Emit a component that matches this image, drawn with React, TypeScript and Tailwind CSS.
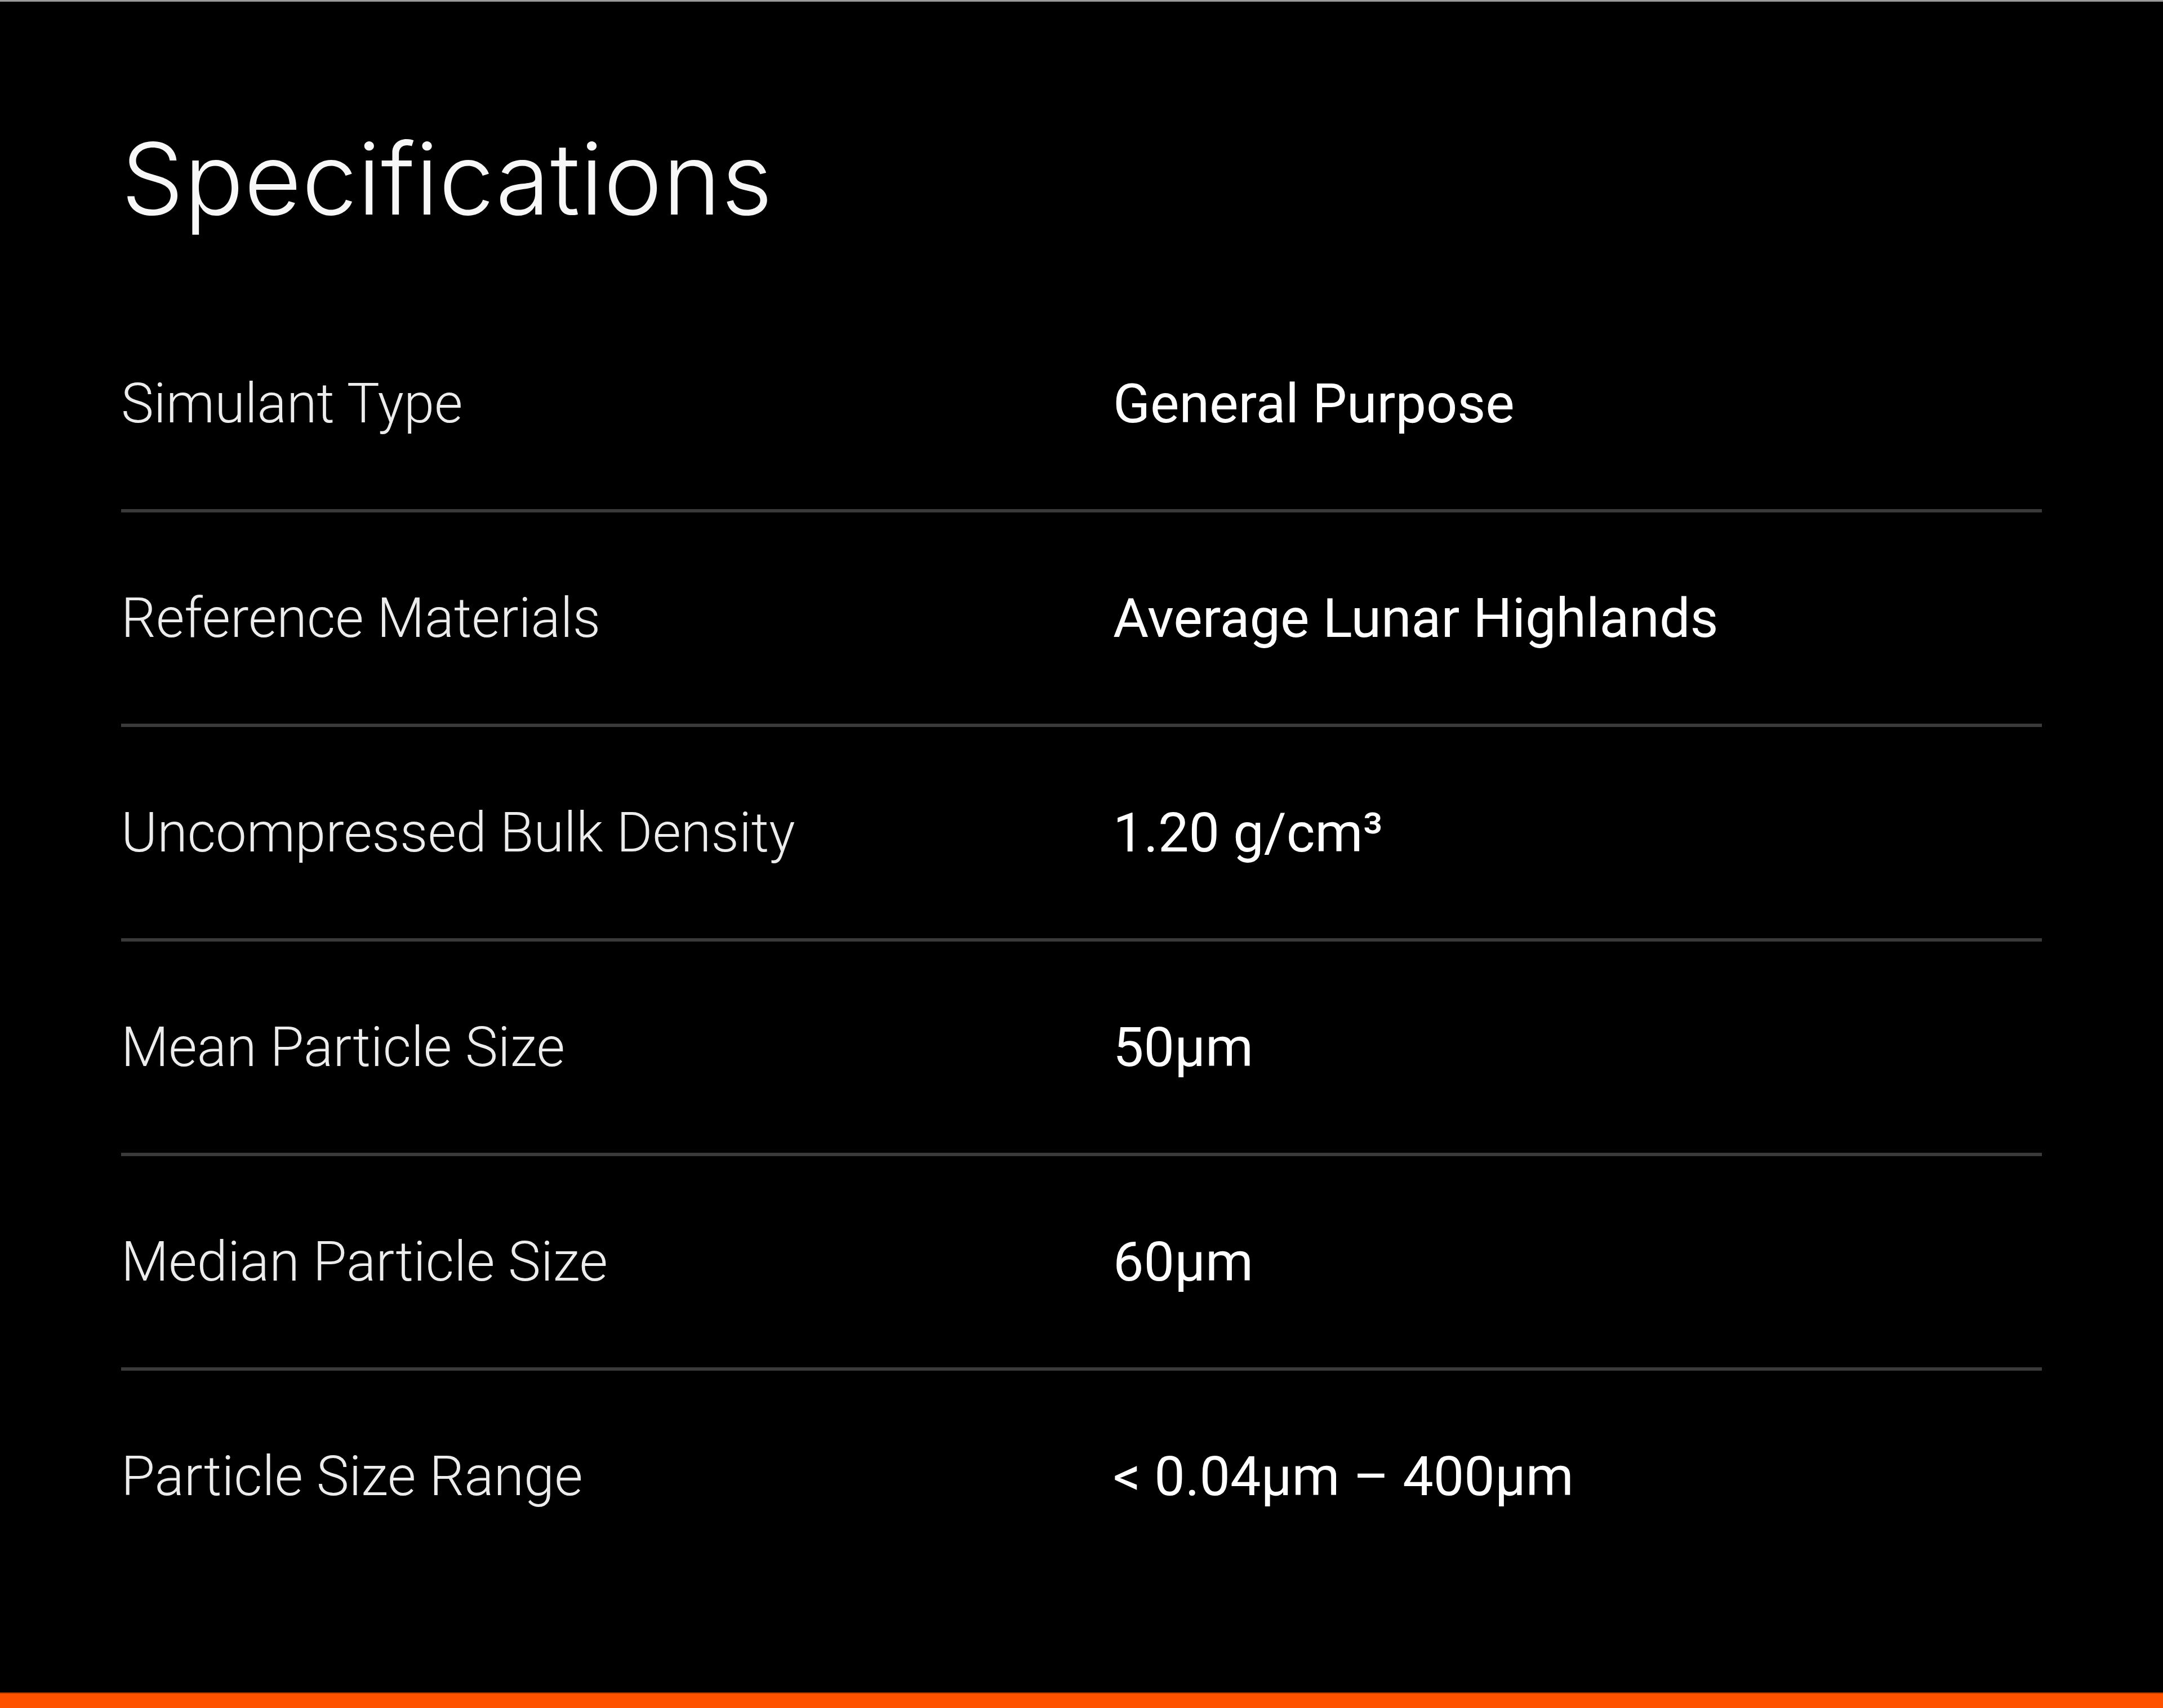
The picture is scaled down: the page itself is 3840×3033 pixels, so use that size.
const specs = [
  { label: "Simulant Type", value: "General Purpose" },
  { label: "Reference Materials", value: "Average Lunar Highlands" },
  { label: "Uncompressed Bulk Density", value: "1.20 g/cm³" },
  { label: "Mean Particle Size", value: "50µm" },
  { label: "Median Particle Size", value: "60µm" },
  { label: "Particle Size Range", value: "< 0.04µm – 400µm" },
];

export default function App() {
  return (
    <main className="flex h-[3033px] flex-col border-t-[3px] border-[#9a9a9a] bg-black text-white">
      <section className="flex-1 px-[215px] pt-[226px]">
        <h2 className="font-['Inter','Liberation_Sans',sans-serif] text-[176px] font-light leading-none tracking-[0.003em] text-[#f7f7f7]">
          Specifications
        </h2>

        <div className="mt-[124px]">
          {specs.map((row, i) => (
            <div
              key={row.label}
              className={
                i < specs.length - 1
                  ? "grid h-[381px] grid-cols-[1761px_1fr] items-center border-b-[6px] border-[#3a3a3a]"
                  : "grid h-[375px] grid-cols-[1761px_1fr] items-center"
              }
            >
              <span className="font-['Roboto',sans-serif] text-[97.5px] font-light leading-[96px] text-[#ececec]">
                {row.label}
              </span>
              <span className="font-['Roboto',sans-serif] text-[97px] font-normal leading-[96px] text-white">
                {row.value}
              </span>
            </div>
          ))}
        </div>
      </section>

      <div className="h-[28px] border-t-[2px] border-[#8a3000] bg-[#ff5200]" />
    </main>
  );
}
